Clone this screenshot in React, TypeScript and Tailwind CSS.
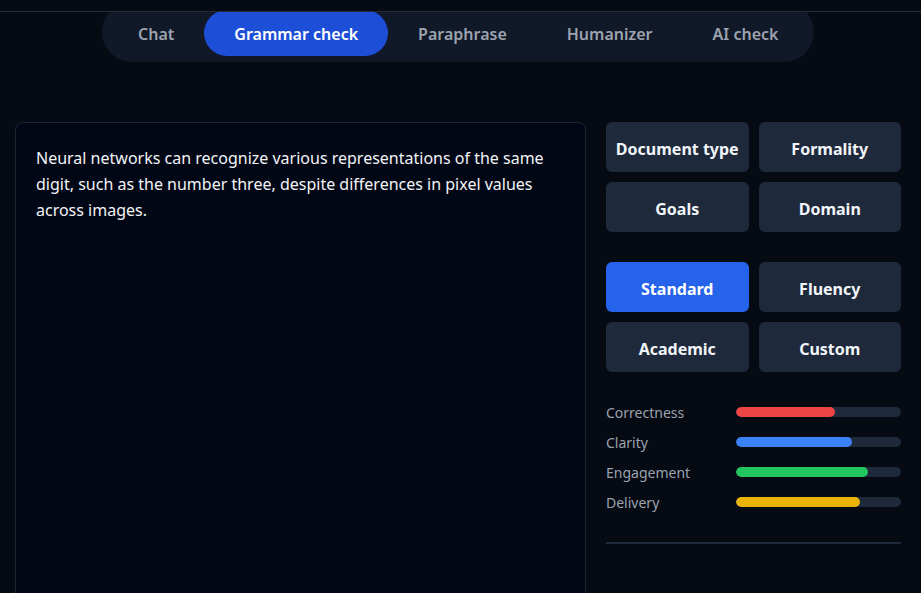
const tabs = ["Chat", "Grammar check", "Paraphrase", "Humanizer", "AI check"];

const options = [
  [
    { label: "Document type" },
    { label: "Formality" },
    { label: "Goals" },
    { label: "Domain" },
  ],
  [
    { label: "Standard", active: true },
    { label: "Fluency" },
    { label: "Academic" },
    { label: "Custom" },
  ],
];

const scores = [
  { label: "Correctness", value: 60, color: "bg-[#ef4444]" },
  { label: "Clarity", value: 70, color: "bg-[#3b82f6]" },
  { label: "Engagement", value: 80, color: "bg-[#22c55e]" },
  { label: "Delivery", value: 75, color: "bg-[#eab308]" },
];

export default function App() {
  return (
    <div
      className="w-[921px] h-[593px] overflow-hidden bg-[#050a13] text-white"
      style={{ fontFamily: '"Noto Sans", "Open Sans", sans-serif' }}
    >
      {/* sticky header strip */}
      <div className="relative z-10 h-[12px] bg-[#050a13] border-b border-[#262c38]" />

      <nav className="-mt-[10px] ml-[102px] flex w-[712px] items-center rounded-full bg-[#111827] px-[6px] pt-[8px] pb-[6px]">
        {tabs.map((tab) => {
          const active = tab === "Grammar check";
          return (
            <button
              key={tab}
              className={`h-[46px] rounded-full px-[30px] pt-[2px] text-[16px] font-semibold whitespace-nowrap ${
                active ? "bg-[#1d4ed8] text-white" : "text-[#9ca3af]"
              }`}
            >
              {tab}
            </button>
          );
        })}
      </nav>

      <main className="mt-[60px] flex gap-[20px] pl-[15px] pr-[20px]">
        <section className="h-[520px] w-[571px] rounded-lg border border-[#1f2433] bg-[#020716] px-[20px] py-[22px]">
          <p className="text-[16px] leading-[26px] text-[#f3f4f6]">
            Neural networks can recognize various representations of the same digit, such as the
            number three, despite differences in pixel values across images.
          </p>
        </section>

        <aside className="flex w-[295px] flex-col">
          {options.map((group, gi) => (
            <div key={gi} className={`grid grid-cols-2 gap-[10px] ${gi > 0 ? "mt-[30px]" : ""}`}>
              {group.map((opt) => (
                <button
                  key={opt.label}
                  className={`h-[50px] rounded-md pt-[3px] text-[16px] font-bold whitespace-nowrap ${
                    opt.active ? "bg-[#2563eb] text-white" : "bg-[#1e293b] text-[#f1f5f9]"
                  }`}
                >
                  {opt.label}
                </button>
              ))}
            </div>
          ))}

          <div className="mt-[30px] flex flex-col gap-[10px]">
            {scores.map((s) => (
              <div key={s.label} className="flex h-[20px] items-center">
                <span className="w-[130px] text-[14px] text-[#9ca3af]">{s.label}</span>
                <div className="h-[10px] flex-1 overflow-hidden rounded-full bg-[#1e293b]">
                  <div className={`h-full rounded-full ${s.color}`} style={{ width: `${s.value}%` }} />
                </div>
              </div>
            ))}
          </div>

          <div className="mt-[30px] h-[2px] bg-[#1e293b]" />
        </aside>
      </main>
    </div>
  );
}
